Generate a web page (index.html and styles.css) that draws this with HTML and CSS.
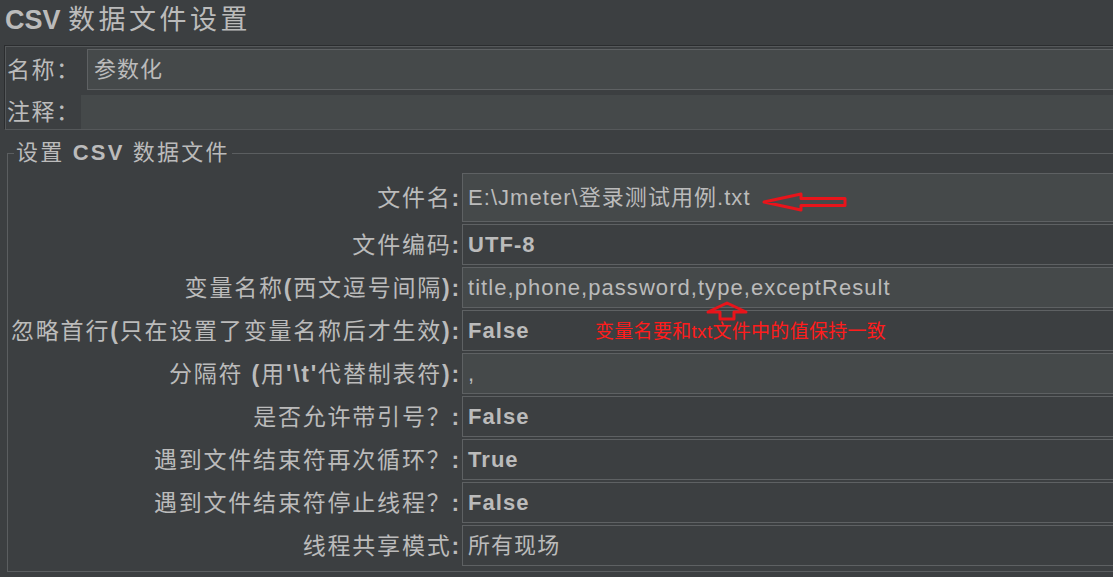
FILE: index.html
```html
<!DOCTYPE html>
<html lang="zh-CN">
<head>
<meta charset="utf-8">
<title>CSV 数据文件设置</title>
<link rel="stylesheet" href="styles.css">
</head>
<body>
<div class="page">
  <h1 class="title"><b>CSV</b> <span class="cjk">数据文件设置</span></h1>

  <div class="name-panel">
    <div class="np-row np-row-name">
      <label class="np-label np-label-name">名称：</label>
      <div class="np-field np-field-name">参数化</div>
    </div>
    <div class="np-row np-row-comment">
      <label class="np-label np-label-comment">注释：</label>
      <div class="np-field np-field-comment"></div>
    </div>
  </div>

  <fieldset class="group">
    <legend class="group-title">设置 <b>CSV</b> 数据文件</legend>
    <div class="form">
      <label class="lbl">文件名<b>:</b></label>
      <div class="fld text">E:\Jmeter\登录测试用例.txt</div>

      <label class="lbl">文件编码<b>:</b></label>
      <div class="fld combo">UTF-8</div>

      <label class="lbl">变量名称<b>(</b>西文逗号间隔<b>):</b></label>
      <div class="fld text">title,phone,password,type,exceptResult</div>

      <label class="lbl">忽略首行<b>(</b>只在设置了变量名称后才生效<b>):</b></label>
      <div class="fld combo">False</div>

      <label class="lbl">分隔符 <b>(</b>用<b>'\t'</b>代替制表符<b>):</b></label>
      <div class="fld text">,</div>

      <label class="lbl">是否允许带引号？<b>:</b></label>
      <div class="fld combo">False</div>

      <label class="lbl">遇到文件结束符再次循环？<b>:</b></label>
      <div class="fld combo">True</div>

      <label class="lbl">遇到文件结束符停止线程？<b>:</b></label>
      <div class="fld combo">False</div>

      <label class="lbl">线程共享模式<b>:</b></label>
      <div class="fld combo plain">所有现场</div>
    </div>
  </fieldset>

  <svg class="note-arrow arrow-left" width="92" height="26" viewBox="0 0 92 26">
    <polygon points="5,12 42,4 42,8.5 86,8.5 86,15.5 42,15.5 42,20" fill="none" stroke="#e8141b" stroke-width="3" stroke-linejoin="round"/>
  </svg>
  <svg class="note-arrow arrow-up" width="48" height="26" viewBox="0 0 48 26">
    <polygon points="24,5 5,14 17,14 17,21 31,21 31,14 43,14" fill="none" stroke="#e8141b" stroke-width="3" stroke-linejoin="round"/>
  </svg>
  <div class="note-text">变量名要和txt文件中的值保持一致</div>
</div>
</body>
</html>
```

FILE: styles.css
```css
html, body {
  margin: 0;
  padding: 0;
}

body {
  background: #3c3f41;
  color: #bbbbbb;
  overflow: hidden;
  font-family: "Liberation Sans", "Noto Sans CJK SC", sans-serif;
}

.page {
  position: relative;
  width: 1150px;
  height: 577px;
}

.title {
  margin: 0;
  height: 40px;
  line-height: 40px;
  padding-left: 5px;
  font-size: 27px;
  font-weight: normal;
  white-space: nowrap;
}

.title b {
  font-weight: bold;
}

.title .cjk {
  letter-spacing: 3.5px;
}

/* name / comment panel */
.name-panel {
  margin: 6px 0 0 5px;
  border: 1px solid #55585a;
  box-shadow: -1px -1px 0 #2b2d2f;
  padding-top: 2px;
  display: flex;
  flex-direction: column;
  gap: 5px;
}

.np-row {
  display: flex;
  align-items: stretch;
}

.np-row-name {
  height: 41px;
}

.np-row-comment {
  height: 34px;
}

.np-label {
  display: flex;
  align-items: center;
  padding-left: 1px;
  font-size: 23px;
  letter-spacing: 1.5px;
  line-height: 26px;
  white-space: nowrap;
  box-sizing: border-box;
}

.np-label-name {
  width: 81px;
}

.np-label-comment {
  width: 75px;
}

.np-field {
  flex: 1;
  box-sizing: border-box;
  background: #45494a;
  display: flex;
  align-items: center;
  font-size: 22px;
  letter-spacing: 1px;
  line-height: 26px;
}

.np-field-name {
  border: 1px solid #5e6163;
  padding: 0 6px;
}

/* CSV settings group */
.group {
  margin: 11px 0 0 7px;
  padding: 8px 0 5px 0;
  border: 1px solid #5b5e60;
  min-width: 0;
}

.group-title {
  margin-left: 6px;
  padding: 0 2px;
  font-size: 22px;
  line-height: 24px;
  letter-spacing: 2.2px;
  white-space: nowrap;
}

.group-title b {
  font-weight: bold;
}

.form {
  display: grid;
  grid-template-columns: 454px 1fr;
  grid-template-rows: 49px repeat(8, 41px);
  row-gap: 2px;
}

.lbl {
  display: flex;
  align-items: center;
  justify-content: flex-end;
  padding-right: 1px;
  font-size: 23px;
  letter-spacing: 1.8px;
  line-height: 26px;
  white-space: pre;
}

.lbl b {
  font-weight: bold;
}

.fld {
  display: flex;
  align-items: center;
  box-sizing: border-box;
  border: 1px solid #5e6163;
  padding: 0 5px;
  font-size: 22px;
  letter-spacing: 1.05px;
  line-height: 26px;
  white-space: nowrap;
}

.fld.text {
  background: #45494a;
}

.fld.combo {
  background: #3c3f41;
  font-weight: bold;
}

.fld.combo.plain {
  font-weight: normal;
}

/* red annotations drawn over the form */
.note-arrow {
  position: absolute;
  display: block;
}

.arrow-left {
  left: 759px;
  top: 190px;
}

.arrow-up {
  left: 703px;
  top: 298px;
}

.note-text {
  position: absolute;
  left: 595px;
  top: 321px;
  font-size: 19px;
  line-height: 22px;
  letter-spacing: 0.3px;
  color: #ff1c1c;
  white-space: nowrap;
}
```
